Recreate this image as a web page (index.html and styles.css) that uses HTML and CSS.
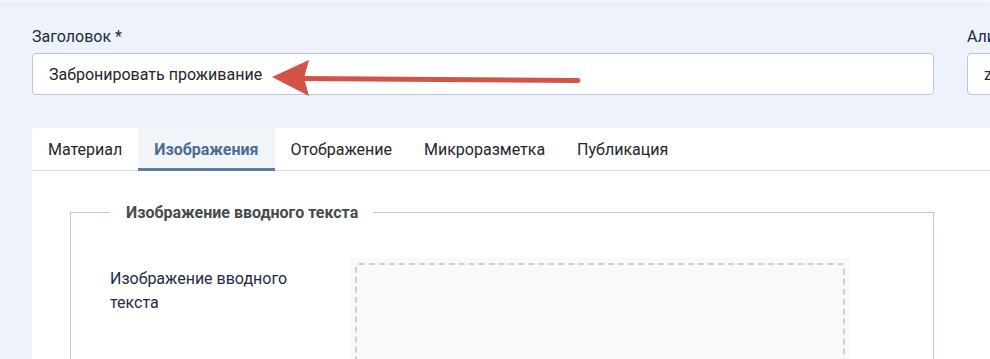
FILE: index.html
```html
<!DOCTYPE html>
<html lang="ru">
<head>
<meta charset="utf-8">
<link rel="stylesheet" href="styles.css">
</head>
<body>
<div class="topbar"></div>
<main class="page">
  <div class="fields">
    <div class="field">
      <label class="label">Заголовок *</label>
      <div class="input">Забронировать проживание</div>
    </div>
    <div class="field">
      <label class="label">Алиас</label>
      <div class="input">zabronirovat-prozhivanie</div>
    </div>
    <svg class="arrow" width="320" height="40" viewBox="0 0 320 40">
      <path d="M28 21.5 L306 23.5" stroke="#d35446" stroke-width="5" stroke-linecap="round" fill="none"/>
      <path d="M0 20 L37 3 L32 21 L37 39 Z" fill="#d35446"/>
    </svg>
  </div>
  <section class="card">
    <nav class="tabs">
      <span class="tab">Материал</span>
      <span class="tab active">Изображения</span>
      <span class="tab">Отображение</span>
      <span class="tab">Микроразметка</span>
      <span class="tab">Публикация</span>
    </nav>
    <div class="content">
      <fieldset class="group">
        <legend class="legend">Изображение вводного текста</legend>
        <div class="row">
          <div class="row-label">Изображение вводного текста</div>
          <div class="media">
            <div class="drop"></div>
          </div>
        </div>
      </fieldset>
    </div>
  </section>
</main>
</body>
</html>
```
FILE: styles.css
```css
* { box-sizing: border-box; }
html, body { margin: 0; padding: 0; }
html { overflow: hidden; }
body {
  background: #eef3fb;
  font-family: Roboto, "Noto Sans", sans-serif;
  font-size: 16px;
  color: #22262a;
  width: 990px;
  height: 359px;
  overflow: hidden;
}
.topbar {
  height: 3px;
  background: #f3f5f9;
  box-shadow: 0 1px 4px rgba(40, 60, 100, 0.08);
}
.page {
  padding: 24px 0 0 32px;
}
.fields {
  position: relative;
  display: flex;
  gap: 33px;
  width: 1300px;
}
.field { display: flex; flex-direction: column; flex-shrink: 0; }
.field:first-child { width: 902px; }
.field:nth-child(2) { width: 300px; }
.label {
  color: #1c2b45;
  line-height: 20px;
  margin-bottom: 6px;
}
.input {
  height: 42px;
  border: 1px solid #b6c7df;
  border-radius: 4px;
  background: #fff;
  padding: 0 16px;
  display: flex;
  align-items: center;
  color: #22262a;
}
.arrow {
  position: absolute;
  left: 240px;
  top: 30px;
}
.card {
  margin-top: 33px;
  background: #fff;
  border-radius: 4px 0 0 0;
  height: 300px;
}
.tabs {
  display: flex;
  height: 43px;
  border-bottom: 1px solid #dde3ec;
}
.tab {
  padding: 0 16px;
  display: flex;
  align-items: center;
  color: #22262a;
}
.tab.active {
  background: #f1f5fa;
  color: #4e6a95;
  font-weight: 700;
  padding: 2px 16px 0;
  border-bottom: 3px solid #6079a3;
  margin-bottom: -1px;
}
.content {
  padding: 32px 0 0 38px;
}
.group {
  margin: 0;
  width: 864px;
  border: 1px solid #b9c8de;
  border-bottom: none;
  padding: 36px 0 0 39px;
  min-height: 200px;
}
.legend {
  margin-left: 0;
  padding: 0 15px 0 16px;
  font-size: 16px;
  font-weight: 700;
  color: #464a4f;
}
.row {
  display: flex;
}
.row-label {
  width: 240px;
  padding-right: 40px;
  line-height: 24px;
  padding-top: 9px;
  color: #1c2b45;
}
.media {
  width: 500px;
  height: 120px;
  background: #f9f9f9;
  padding: 5px;
}
.drop {
  height: 110px;
  border: 2px dashed #cfcfcf;
  border-radius: 4px;
}
```
